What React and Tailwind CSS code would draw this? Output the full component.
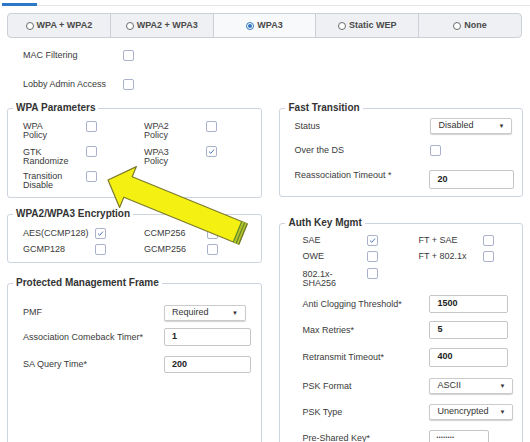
import React from "react";

const TABS = [
  { label: "WPA + WPA2" },
  { label: "WPA2 + WPA3" },
  { label: "WPA3", selected: true },
  { label: "Static WEP" },
  { label: "None" },
];

function Radio({ on }) {
  if (on) {
    return (
      <span className="flex h-[8px] w-[8px] items-center justify-center rounded-full border border-[#2f74c0] bg-white">
        <span className="h-[4px] w-[4px] rounded-full bg-[#2f74c0]" />
      </span>
    );
  }
  return <span className="h-[8px] w-[8px] rounded-full border border-[#6b6b6b] bg-white" />;
}

function Check({ on }) {
  return (
    <span className="flex h-[11px] w-[11px] items-center justify-center rounded-[2px] border border-[#aab2cc] bg-white">
      {on && (
        <svg width="9" height="9" viewBox="0 0 9 9">
          <path d="M2 4.6 L3.8 6.3 L7 2.6" fill="none" stroke="#4d78c2" strokeWidth="1" />
        </svg>
      )}
    </span>
  );
}

function Box({ legend, className, children }) {
  return (
    <div className={"rounded-[3px] border border-[#ccd4e0] " + className}>
      <span className="-mt-[7px] ml-[5px] block w-fit bg-white px-[3px] text-[10px] font-bold leading-[12px] text-[#333]">
        {legend}
      </span>
      {children}
    </div>
  );
}

function TextInput({ value, className }) {
  return (
    <div
      className={
        "flex items-center rounded-[2px] border border-[#c6c6c6] bg-white pl-[7px] text-[9px] font-bold text-[#222] " +
        className
      }
    >
      {value}
    </div>
  );
}

function Select({ value, className }) {
  return (
    <div
      className={
        "flex items-center justify-between rounded-[2px] border border-[#cbcbcb] bg-white pl-[7px] pr-[7px] text-[9px] text-[#333] shadow-[0_1px_1px_rgba(0,0,0,0.18)] " +
        className
      }
    >
      <span>{value}</span>
      <span className="text-[6px] leading-none text-[#333]">▼</span>
    </div>
  );
}

function Label({ children, className = "" }) {
  return <span className={"text-[9px] leading-[11px] text-[#3a3a3a] " + className}>{children}</span>;
}

function TwoLine({ a, b, className = "" }) {
  return (
    <span className={"block text-[9px] leading-[9px] text-[#3a3a3a] " + className}>
      {a}
      <br />
      {b}
    </span>
  );
}

function Arrow() {
  return (
    <svg
      className="pointer-events-none absolute left-0 top-0"
      width="530"
      height="442"
      viewBox="0 0 530 442"
    >
      <polygon
        points="108,180 136.4,166.6 132.2,176.8 247.2,223.8 238.8,244.2 123.8,197.2 119.6,207.4"
        fill="#f4f012"
        stroke="#7c7a2c"
        strokeWidth="1.2"
        strokeLinejoin="round"
      />
      <polygon points="241.7,221.5 247.2,223.8 238.8,244.2 233.3,241.9" fill="#b9c52c" />
      <line x1="241.7" y1="221.5" x2="233.3" y2="241.9" stroke="#5f8a28" strokeWidth="1.2" />
      <line x1="244.6" y1="222.7" x2="236.2" y2="243.1" stroke="#5f8a28" strokeWidth="1.2" />
      <line x1="247.2" y1="223.8" x2="238.8" y2="244.2" stroke="#6d7a2a" strokeWidth="1.2" />
    </svg>
  );
}

export default function App() {
  return (
    <div className="relative h-[442px] w-[530px] overflow-hidden bg-white font-[family-name:'Liberation_Sans',Arial,sans-serif] text-[#3a3a3a]">
      <div className="flex items-end pt-[3px]">
        <div className="ml-[2px] h-[3px] w-[35px] bg-[#2b78c8]" />
        <div className="h-px flex-1 bg-[#e3e5e9]" />
      </div>

      <div className="ml-[7px] mt-[7px] flex h-[25px] w-[515px] overflow-hidden rounded-[4px] border border-[#cbd0d7] bg-[#eef0f3]">
        {TABS.map((t, i) => (
          <div
            key={t.label}
            className={
              "flex flex-1 items-center justify-center gap-[3px] text-[9px] font-bold text-[#4a4a4a] " +
              (i > 0 ? "border-l border-[#cbd0d7] " : "") +
              (t.selected ? "bg-[#f8f9fb]" : "")
            }
          >
            <Radio on={t.selected} />
            <span>{t.label}</span>
          </div>
        ))}
      </div>

      <div className="mt-[12px] flex h-[11px] items-center pl-[23px]">
        <Label className="w-[100px]">MAC Filtering</Label>
        <Check />
      </div>
      <div className="mt-[18px] flex h-[11px] items-center pl-[23px]">
        <Label className="w-[100px]">Lobby Admin Access</Label>
        <Check />
      </div>

      <div className="mt-[18px] flex gap-[17px] px-[7px]">
        <div className="flex w-[257px] flex-col">
          <Box legend="WPA Parameters" className="h-[90px]">
            <div className="grid grid-cols-[63px_58px_62px_11px] gap-y-[5.5px] pl-[15px] pt-[7px]">
              <TwoLine a="WPA" b="Policy" className="pt-[1px]" />
              <Check />
              <TwoLine a="WPA2" b="Policy" className="pt-[1px]" />
              <Check />
              <TwoLine a="GTK" b="Randomize" className="pt-[2px]" />
              <Check />
              <TwoLine a="WPA3" b="Policy" className="pt-[2px]" />
              <Check on />
              <TwoLine a="Transition" b="Disable" className="pt-[1px]" />
              <Check />
            </div>
          </Box>

          <Box legend="WPA2/WPA3 Encryption" className="mt-[16px] h-[49px]">
            <div className="grid grid-cols-[72px_49px_63px_11px] items-center gap-y-[5px] pl-[15px] pt-[8px]">
              <Label>AES(CCMP128)</Label>
              <Check on />
              <Label>CCMP256</Label>
              <Check />
              <Label>GCMP128</Label>
              <Check />
              <Label>GCMP256</Label>
              <Check />
            </div>
          </Box>

          <Box legend="Protected Management Frame" className="mt-[20px] h-[170px]">
            <div className="flex flex-col pl-[15px]">
              <div className="mt-[15px] flex h-[17px] items-center">
                <Label className="w-[141px]">PMF</Label>
                <Select value="Required" className="h-[16px] w-[82px]" />
              </div>
              <div className="mt-[7px] flex h-[18px] items-center">
                <Label className="w-[141px]">Association Comeback Timer*</Label>
                <TextInput value="1" className="h-[18px] w-[87px]" />
              </div>
              <div className="mt-[10px] flex h-[17px] items-center">
                <Label className="w-[141px]">SA Query Time*</Label>
                <TextInput value="200" className="h-[17px] w-[87px]" />
              </div>
            </div>
          </Box>
        </div>

        <div className="flex w-[245px] flex-col">
          <Box legend="Fast Transition" className="h-[89px]">
            <div className="flex flex-col pl-[14px]">
              <div className="mt-[4px] flex h-[16px] items-center">
                <Label className="w-[136px]">Status</Label>
                <Select value="Disabled" className="h-[16px] w-[82px]" />
              </div>
              <div className="mt-[11px] flex h-[11px] items-center">
                <Label className="w-[136px]">Over the DS</Label>
                <Check />
              </div>
              <div className="mt-[14px] flex items-start">
                <Label className="w-[135px]">Reassociation Timeout *</Label>
                <TextInput value="20" className="h-[19px] w-[85px]" />
              </div>
            </div>
          </Box>

          <Box legend="Auth Key Mgmt" className="mt-[26px] h-[240px]">
            <div className="grid grid-cols-[65px_51px_65px_11px] items-center gap-y-[5px] pl-[22px] pt-[6px]">
              <Label>SAE</Label>
              <Check on />
              <Label>FT + SAE</Label>
              <Check />
              <Label>OWE</Label>
              <Check />
              <Label>FT + 802.1x</Label>
              <Check />
              <TwoLine a="802.1x-" b="SHA256" className="mt-[1px] self-start pt-[2px]" />
              <span className="mt-[1px] self-start">
                <Check />
              </span>
            </div>
            <div className="flex flex-col pl-[22px]">
              <div className="mt-[7px] flex h-[18px] items-center">
                <Label className="w-[127px]">Anti Clogging Threshold*</Label>
                <TextInput value="1500" className="h-[18px] w-[79px]" />
              </div>
              <div className="mt-[8px] flex h-[18px] items-center">
                <Label className="w-[127px]">Max Retries*</Label>
                <TextInput value="5" className="h-[18px] w-[79px]" />
              </div>
              <div className="mt-[9px] flex h-[18px] items-center">
                <Label className="w-[127px]">Retransmit Timeout*</Label>
                <TextInput value="400" className="h-[19px] w-[79px]" />
              </div>
              <div className="mt-[11px] flex h-[18px] items-center">
                <Label className="w-[127px]">PSK Format</Label>
                <Select value="ASCII" className="h-[16px] w-[84px]" />
              </div>
              <div className="mt-[8px] flex h-[18px] items-center">
                <Label className="w-[127px]">PSK Type</Label>
                <Select value="Unencrypted" className="h-[16px] w-[84px]" />
              </div>
              <div className="mt-[8px] flex h-[18px] items-center">
                <Label className="w-[127px]">Pre-Shared Key*</Label>
                <div className="flex h-[17px] w-[60px] items-center rounded-[2px] border border-[#c6c6c6] bg-white pl-[6px] text-[5px] tracking-[0.5px] text-[#333]">
                  ••••••••
                </div>
              </div>
            </div>
          </Box>
        </div>
      </div>

      <Arrow />
    </div>
  );
}
